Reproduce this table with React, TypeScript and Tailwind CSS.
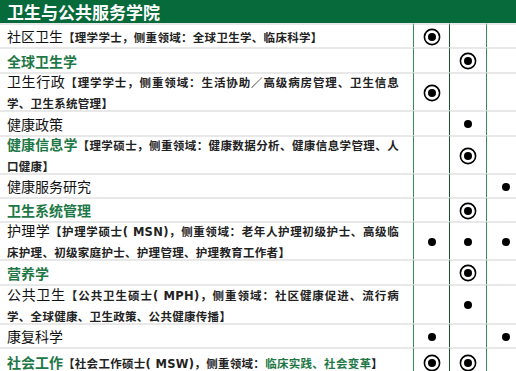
import React from "react";

type Ic = "c" | "d" | null;

function Icon({ t }: { t: Ic }) {
  if (t === "c")
    return (
      <svg width="18" height="18" viewBox="0 0 18 18">
        <circle cx="9" cy="9" r="7.6" fill="none" stroke="#000" strokeWidth="1.6" />
        <circle cx="9" cy="9" r="4" fill="#000" />
      </svg>
    );
  if (t === "d")
    return (
      <svg width="10" height="10" viewBox="0 0 10 10">
        <circle cx="5" cy="5" r="4" fill="#000" />
      </svg>
    );
  return null;
}

function Row({
  h,
  icons,
  children,
}: {
  h: string;
  icons: Ic[];
  children: React.ReactNode;
}) {
  return (
    <div className={`flex ${h}`}>
      <div className="w-[413px] shrink-0 border-t-2 border-t-[#e8e8e8] pl-[7px] pr-[14px] pt-[2px] flex flex-col justify-center">
        {children}
      </div>
      <div className="w-[36px] shrink-0 border-t-2 border-t-[#e8e8e8] border-l border-l-[#3b8a5e] flex items-center justify-center pt-[1px]">
        <Icon t={icons[0]} />
      </div>
      <div className="w-[37px] shrink-0 border-t-2 border-t-[#e8e8e8] border-l border-l-[#1c5236] flex items-center justify-center pt-[1px]">
        <Icon t={icons[1]} />
      </div>
      <div className="w-[38px] shrink-0 border-t-2 border-t-[#e8e8e8] border-l border-l-[#3b8a5e] flex items-center justify-center pt-[1px]">
        <Icon t={icons[2]} />
      </div>
    </div>
  );
}

const N = ({ children }: { children: React.ReactNode }) => (
  <span className="text-[14px] text-[#111]">{children}</span>
);
const G = ({ children }: { children: React.ReactNode }) => (
  <span className="text-[14px] font-bold text-[#1e7846]">{children}</span>
);
const B = ({ children }: { children: React.ReactNode }) => (
  <span className="text-[11.5px] font-semibold tracking-[0.3px] text-[#222]">{children}</span>
);

const L1 = ({ children }: { children: React.ReactNode }) => (
  <div className="leading-[19px] whitespace-nowrap text-justify [text-align-last:justify]">{children}</div>
);
const L2 = ({ children }: { children: React.ReactNode }) => (
  <div className="leading-[19px] whitespace-nowrap">{children}</div>
);
const S = ({ children }: { children: React.ReactNode }) => (
  <div className="leading-[20px] whitespace-nowrap">{children}</div>
);

export default function App() {
  return (
    <div className="w-[516px] h-[371px] overflow-hidden bg-white font-['DejaVu_Sans','Noto_Sans_CJK_SC',sans-serif]">
      <div className="w-[524px]">
        <div className="h-[23px] bg-[#066a3a] flex items-center pl-[7px]">
          <span className="text-white text-[17px] font-bold font-['Noto_Sans_CJK_SC',sans-serif] leading-none">
            卫生与公共服务学院
          </span>
        </div>

        <Row h="h-[24px]" icons={["c", null, null]}>
          <S>
            <N>社区卫生</N>
            <B>【理学学士，侧重领域：全球卫生学、临床科学】</B>
          </S>
        </Row>

        <Row h="h-[25px]" icons={[null, "c", null]}>
          <S>
            <G>全球卫生学</G>
          </S>
        </Row>

        <Row h="h-[38px]" icons={["c", null, null]}>
          <L1>
            <N>卫生行政</N>
            <B>【理学学士，侧重领域：生活协助／高级病房管理、卫生信息</B>
          </L1>
          <L2>
            <B>学、卫生系统管理】</B>
          </L2>
        </Row>

        <Row h="h-[25px]" icons={[null, "d", null]}>
          <S>
            <N>健康政策</N>
          </S>
        </Row>

        <Row h="h-[38px]" icons={[null, "c", null]}>
          <L1>
            <G>健康信息学</G>
            <B>【理学硕士，侧重领域：健康数据分析、健康信息学管理、人</B>
          </L1>
          <L2>
            <B>口健康】</B>
          </L2>
        </Row>

        <Row h="h-[24px]" icons={[null, null, "d"]}>
          <S>
            <N>健康服务研究</N>
          </S>
        </Row>

        <Row h="h-[24px]" icons={[null, "c", null]}>
          <S>
            <G>卫生系统管理</G>
          </S>
        </Row>

        <Row h="h-[38px]" icons={["d", "d", "d"]}>
          <L1>
            <N>护理学</N>
            <B>【护理学硕士( MSN)，侧重领域：老年人护理初级护士、高级临</B>
          </L1>
          <L2>
            <B>床护理、初级家庭护士、护理管理、护理教育工作者】</B>
          </L2>
        </Row>

        <Row h="h-[25px]" icons={[null, "c", null]}>
          <S>
            <G>营养学</G>
          </S>
        </Row>

        <Row h="h-[39px]" icons={[null, "d", null]}>
          <L1>
            <N>公共卫生</N>
            <B>【公共卫生硕士( MPH)，侧重领域：社区健康促进、流行病</B>
          </L1>
          <L2>
            <B>学、全球健康、卫生政策、公共健康传播】</B>
          </L2>
        </Row>

        <Row h="h-[24px]" icons={["d", null, "d"]}>
          <S>
            <N>康复科学</N>
          </S>
        </Row>

        <Row h="h-[28px]" icons={["c", "c", null]}>
          <S>
            <G>社会工作</G>
            <B>
              【社会工作硕士( MSW)，侧重领域：
              <span className="text-[#1e7846]">临床实践、社会变革</span>】
            </B>
          </S>
        </Row>
      </div>
    </div>
  );
}
